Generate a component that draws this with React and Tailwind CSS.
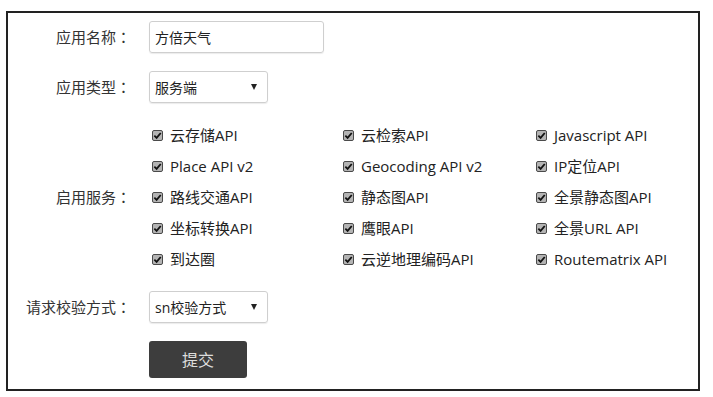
import React from 'react';

const font = "font-['Open_Sans','Noto_Sans_CJK_SC',sans-serif]";

const services = [
  '云存储API', '云检索API', 'Javascript API',
  'Place API v2', 'Geocoding API v2', 'IP定位API',
  '路线交通API', '静态图API', '全景静态图API',
  '坐标转换API', '鹰眼API', '全景URL API',
  '到达圈', '云逆地理编码API', 'Routematrix API',
];

const Check = () => (
  <span className="w-[11px] h-[11px] shrink-0 rounded-[2px] border border-[#4a4a4a] bg-[#b4b4b4] flex items-center justify-center">
    <svg viewBox="0 0 10 10" className="w-[9px] h-[9px]">
      <path d="M1.5 5.2 L4 7.6 L8.6 2.2" fill="none" stroke="#111" strokeWidth="2" />
    </svg>
  </span>
);

// colon drawn with the TC face so it sits centred, as in the original
const Label = ({ children }) => (
  <div className="w-[123px] shrink-0 text-right text-[15px] text-[#333]">
    {children}
    <span className="font-['Noto_Sans_CJK_TC',sans-serif]">：</span>
  </div>
);

const Select = ({ value }) => (
  <div className="ml-[18px] w-[119px] h-[32px] border border-[#cfcfcf] rounded-[3px] shadow-[0_1px_1px_rgba(0,0,0,0.08)] flex items-center justify-between pl-[5px] pr-[10px] text-[14px] text-[#222]">
    <span>{value}</span>
    <span className="w-0 h-0 border-l-[3px] border-r-[3px] border-t-[6px] border-l-transparent border-r-transparent border-t-[#222]" />
  </div>
);

export default function App() {
  return (
    <div className={`min-h-screen bg-white pt-[11px] pl-[6px] ${font}`}>
      <div className="w-[694px] h-[380px] border-2 border-[#222] pt-[8px]">
        {/* 应用名称 */}
        <div className="flex items-center h-[32px]">
          <Label>应用名称</Label>
          <div className="ml-[18px] w-[175px] h-[32px] border border-[#cfcfcf] rounded-[3px] shadow-[0_1px_1px_rgba(0,0,0,0.08)] flex items-center pl-[5px] text-[14px] text-[#222]">
            方倍天气
          </div>
        </div>

        {/* 应用类型 */}
        <div className="flex items-center h-[32px] mt-[18px]">
          <Label>应用类型</Label>
          <Select value="服务端" />
        </div>

        {/* 启用服务 */}
        <div className="flex items-center mt-[17px]">
          <Label>启用服务</Label>
          <div className="ml-[21px] grid grid-cols-[191px_193px_auto]">
            {services.map(s => (
              <div key={s} className="h-[31px] flex items-center gap-[7px] text-[15px] text-[#222]">
                <Check />
                <span>{s}</span>
              </div>
            ))}
          </div>
        </div>

        {/* 请求校验方式 */}
        <div className="flex items-center h-[32px] mt-[16px]">
          <Label>请求校验方式</Label>
          <Select value="sn校验方式" />
        </div>

        <div className="flex mt-[18px]">
          <div className="w-[123px] shrink-0" />
          <button className="ml-[18px] w-[98px] h-[37px] rounded-[3px] bg-[#3d3d3d] text-[#ddd] text-[16px]">
            提交
          </button>
        </div>
      </div>
    </div>
  );
}
